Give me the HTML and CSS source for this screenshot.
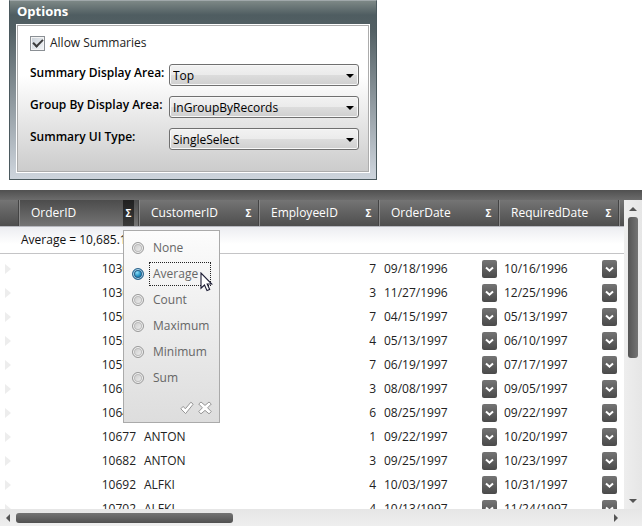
FILE: index.html
```html
<!DOCTYPE html>
<html lang="en">
<head>
<meta charset="utf-8">
<title>Summaries</title>
<link rel="stylesheet" href="styles.css">
</head>
<body>
<section class="options">
  <h1 class="options-title">Options</h1>
  <form class="options-body">
    <label class="check"><input type="checkbox" class="check-box" checked>Allow Summaries</label>
    <div class="field">
      <label class="field-label" for="display-area">Summary Display Area:</label>
      <span class="select"><select id="display-area"><option>Top</option></select></span>
    </div>
    <div class="field">
      <label class="field-label" for="group-area">Group By Display Area:</label>
      <span class="select"><select id="group-area"><option>InGroupByRecords</option></select></span>
    </div>
    <div class="field">
      <label class="field-label" for="ui-type">Summary UI Type:</label>
      <span class="select"><select id="ui-type"><option>SingleSelect</option></select></span>
    </div>
  </form>
</section>

<main class="grid">
  <div class="grid-caption"></div>
  <div class="grid-main">
    <div class="grid-view">
      <table class="records">
        <colgroup><col class="col-selector"><col class="col"><col class="col"><col class="col"><col class="col"><col class="col"><col></colgroup>
        <thead>
          <tr>
            <td class="corner"></td>
            <th class="head-active">
              <div class="head"><span>OrderID</span><button class="sigma sigma-open" aria-label="Summaries for OrderID">Σ</button></div>
              <form class="popup">
                <label class="choice"><input type="radio" name="summary"><span>None</span></label>
                <label class="choice"><input type="radio" name="summary" checked><span class="focused">Average</span></label>
                <label class="choice"><input type="radio" name="summary"><span>Count</span></label>
                <label class="choice"><input type="radio" name="summary"><span>Maximum</span></label>
                <label class="choice"><input type="radio" name="summary"><span>Minimum</span></label>
                <label class="choice"><input type="radio" name="summary"><span>Sum</span></label>
                <div class="popup-actions">
                  <button type="button" aria-label="Apply"><svg width="14" height="14" viewBox="0 0 14 14"><path d="M.8 7.8 3.2 5.4 5.3 7.8 10.9 1.2 13.2 3.2 5.6 12.6Z" fill="#fff" stroke="#969696"/></svg></button>
                  <button type="button" aria-label="Cancel"><svg width="14" height="14" viewBox="0 0 14 14"><path d="M3 1 7 4.4 11 1 13.3 3 9.6 6.8 13.3 10.6 11 12.8 7 9.4 3 12.8.7 10.6 4.4 6.8.7 3Z" fill="#fff" stroke="#969696"/></svg></button>
                </div>
                <svg class="pointer" width="13" height="20" viewBox="0 0 13 20"><path d="M1 1V16.2L4.5 13 7 18.6 9.7 17.4 7.2 12H11.8Z" fill="#fff" stroke="#1b1b33" stroke-width="1.1"/></svg>
              </form>
            </th>
            <th><div class="head"><span>CustomerID</span><button class="sigma" aria-label="Summaries for CustomerID">Σ</button></div></th>
            <th><div class="head"><span>EmployeeID</span><button class="sigma" aria-label="Summaries for EmployeeID">Σ</button></div></th>
            <th><div class="head"><span>OrderDate</span><button class="sigma" aria-label="Summaries for OrderDate">Σ</button></div></th>
            <th><div class="head"><span>RequiredDate</span><button class="sigma" aria-label="Summaries for RequiredDate">Σ</button></div></th>
            <th></th>
          </tr>
          <tr class="summary"><td></td><td colspan="6">Average = 10,685.11</td></tr>
        </thead>
        <tbody id="rows"></tbody>
      </table>
    </div>
    <div class="vscroll"><i class="arrow up"></i><i class="vthumb"></i><i class="arrow down"></i></div>
  </div>
  <div class="hscroll"><i class="arrow left"></i><i class="hthumb"></i><i class="arrow right"></i></div>
</main>
<script src="rows.js"></script>
</body>
</html>
```
FILE: rows.js
```js
const records = [
  ["10308", "ANATR", 7, "09/18/1996", "10/16/1996"],
  ["10365", "ANTON", 3, "11/27/1996", "12/25/1996"],
  ["10507", "ANTON", 7, "04/15/1997", "05/13/1997"],
  ["10535", "ANTON", 4, "05/13/1997", "06/10/1997"],
  ["10573", "ANTON", 7, "06/19/1997", "07/17/1997"],
  ["10625", "ANATR", 3, "08/08/1997", "09/05/1997"],
  ["10643", "ALFKI", 6, "08/25/1997", "09/22/1997"],
  ["10677", "ANTON", 1, "09/22/1997", "10/20/1997"],
  ["10682", "ANTON", 3, "09/25/1997", "10/23/1997"],
  ["10692", "ALFKI", 4, "10/03/1997", "10/31/1997"],
  ["10702", "ALFKI", 4, "10/13/1997", "11/24/1997"]
];
const menuRows = 7;
const dateCell = (value) =>
  `<td><div class="date"><span>${value}</span><button class="drop" aria-label="Pick date">` +
  `<svg width="9" height="7" viewBox="0 0 9 7"><path d="M1 1.5 4.5 4.7 8 1.5" fill="none" stroke="#fff" stroke-width="2"/></svg></button></div></td>`;
document.getElementById("rows").innerHTML = records.map((r, i) =>
  `<tr><td class="selector"><i class="marker"></i></td><td class="num">${r[0]}</td>` +
  `<td>${i < menuRows ? "" : r[1]}</td><td class="num">${r[2]}</td>` +
  `${dateCell(r[3])}${dateCell(r[4])}<td></td></tr>`).join("");
```
FILE: styles.css
```css
* { box-sizing: border-box; }

body {
  margin: 0;
  height: 100vh;
  display: flex;
  flex-direction: column;
  gap: 10px;
  overflow: hidden;
  background: #fff;
  color: #222;
  font: 12px/16px "Open Sans", "Noto Sans", sans-serif;
}

button, select, input { font: inherit; margin: 0; }
button { padding: 0; border: 0; background: none; color: inherit; }

/* Options panel */
.options {
  width: 368px;
  margin-left: 9px;
  padding: 0 7px 7px;
  border: 1px solid #4b595e;
  border-top-color: #a0a8aa;
  background: linear-gradient(#7d8886, #4f5d61 14px, #525f63 28px, #c9d0d8 170px, #cdd4dc);
}
.options-title {
  margin: 0;
  padding: 2px 0 6px;
  color: #fff;
  font-size: 13px;
  line-height: 16px;
  font-weight: 700;
}
.options-body {
  display: flex;
  flex-direction: column;
  gap: 10px;
  padding: 9px 9px 21px 12px;
  border: 1px solid #acacac;
  outline: 1px solid #fff;
  background: linear-gradient(#fff 34%, #ccc);
  color: #000;
}
.check {
  display: flex;
  align-items: center;
  gap: 5px;
  height: 16px;
  margin-bottom: 3px;
  color: #222;
}
.check-box {
  appearance: none;
  width: 15px;
  height: 15px;
  border: 1px solid #8a8f94;
  box-shadow: inset 0 0 0 1px #f4f4f4;
  background: linear-gradient(135deg, #c9d0d7, #f4f6f8);
  display: grid;
  place-items: center;
}
.check-box:checked::after {
  content: "";
  width: 8px;
  height: 4px;
  margin-bottom: 3px;
  border: solid #3c3c3c;
  border-width: 0 0 2px 2px;
  transform: rotate(-45deg);
}
.field { display: flex; height: 22px; }
.field-label { width: 139px; padding-top: 1px; font-weight: 600; white-space: nowrap; }
.select { position: relative; flex: 1; display: flex; }
.select select {
  appearance: none;
  flex: 1;
  height: 22px;
  padding: 1px 3px 0;
  border: 1px solid #707070;
  border-radius: 3px;
  box-shadow: inset 0 0 0 1px #f8f8f8;
  background: linear-gradient(#f2f2f2, #ebebeb 50%, #dddddd 50%, #cfcfcf);
  color: #000;
}
.select::after {
  content: "";
  position: absolute;
  right: 5px;
  top: 10px;
  border: 4px solid transparent;
  border-top-color: #000;
  border-bottom: 0;
}

/* Data grid */
.grid { flex: 1; min-height: 0; display: flex; flex-direction: column; }
.grid-caption { height: 10px; background: linear-gradient(#505050, #6c6c6c); }
.grid-main { flex: 1; min-height: 0; display: flex; }
.grid-view { flex: 1; overflow: hidden; }

.records { width: 100%; table-layout: fixed; border-spacing: 0; }
.col-selector { width: 19px; }
.col { width: 120px; }
.records td, .records th { padding: 0; height: 24px; }

.corner, .records th {
  height: 26px;
  background: linear-gradient(#747474, #4e4e4e);
}
.records th {
  position: relative;
  border-left: 1px solid #8a8a8a;
  box-shadow: -1px 0 #444;
  color: #fff;
  font-weight: 400;
  text-align: left;
}
.records .head-active { background: linear-gradient(#4c4c4c, #747474); }
.head {
  display: flex;
  justify-content: space-between;
  align-items: center;
  height: 26px;
  padding: 0 5px 0 11px;
}
.sigma { width: 11px; height: 26px; font-size: 10px; font-weight: 700; }
.sigma-open { background: linear-gradient(#202020, #3a3a3a); }

.records .summary td {
  height: 31px;
  padding: 0 2px 4px;
  background: linear-gradient(#b8b9c0 1px, #ecedf1 1px, #fff 18px, #fff 27px, #c4c4c6 27px) 0 0 / 100% 28px no-repeat;
  color: #111;
}

.records tbody td { padding: 0 3px 0 5px; white-space: nowrap; }
.records .num { text-align: right; }
.records .selector { padding: 0 5px; }
.marker {
  display: block;
  width: 0;
  border: 5px solid transparent;
  border-left: 6px solid #ededed;
  border-right: 0;
}
.date { display: flex; justify-content: space-between; align-items: center; }
.drop {
  display: grid;
  place-items: center;
  width: 15px;
  height: 18px;
  margin-right: -1px;
  border-radius: 2px;
  background: linear-gradient(#747474, #4a4a4a);
}

/* Summary menu */
.popup {
  position: absolute;
  z-index: 1;
  left: 103px;
  top: 30px;
  width: 97px;
  padding: 4px 7px 7px 8px;
  border: 1px solid #aaa;
  background: linear-gradient(#fcfcfc, #ddd);
  color: #666;
}
.choice { display: flex; align-items: center; gap: 5px; height: 26px; }
.choice span { padding: 3px; border: 1px solid transparent; }
.choice .focused { padding-right: 12px; border: 1px dotted #222; }
.choice input {
  appearance: none;
  flex: none;
  width: 12px;
  height: 12px;
  border: 1px solid #999;
  border-radius: 50%;
  box-shadow: inset 0 0 0 1px #f6f6f6, inset 0 0 0 2px #bbb;
  background: linear-gradient(135deg, #c4c4c4, #f6f6f6);
}
.choice input:checked {
  border-color: #2c628b;
  box-shadow: inset 0 0 0 1px #b5dcf1, inset 0 0 0 2px #285f88;
  background: radial-gradient(circle at 40% 35%, #8fe0fa, #1889bd 45%, #0c4b73);
}
.popup-actions { display: flex; justify-content: flex-end; gap: 4px; padding-top: 10px; }
.popup-actions button { height: 14px; }
.popup svg { display: block; }
.popup .pointer { position: absolute; left: 76px; top: 41px; }

/* Scroll bars */
.vscroll {
  display: flex;
  flex-direction: column;
  align-items: center;
  width: 18px;
  padding: 7px 0 6px;
  background: linear-gradient(90deg, #eee, #e6e6e6);
}
.vthumb {
  width: 10px;
  height: 141px;
  margin: 6px 0 auto;
  border-radius: 3px;
  background: linear-gradient(90deg, #555, #747474);
}
.hscroll {
  display: flex;
  align-items: center;
  height: 17px;
  padding: 0 24px 0 6px;
  background: linear-gradient(#e6e6e6, #eee);
}
.hthumb {
  width: 217px;
  height: 10px;
  margin: 0 auto 0 6px;
  border-radius: 3px;
  background: linear-gradient(#747474, #505050);
}
.arrow { border: 4px solid transparent; }
.up { border-top: 0; border-bottom-color: #555; }
.down { border-bottom: 0; border-top-color: #555; }
.left { border-left: 0; border-right-color: #555; }
.right { border-right: 0; border-left-color: #555; }
```
